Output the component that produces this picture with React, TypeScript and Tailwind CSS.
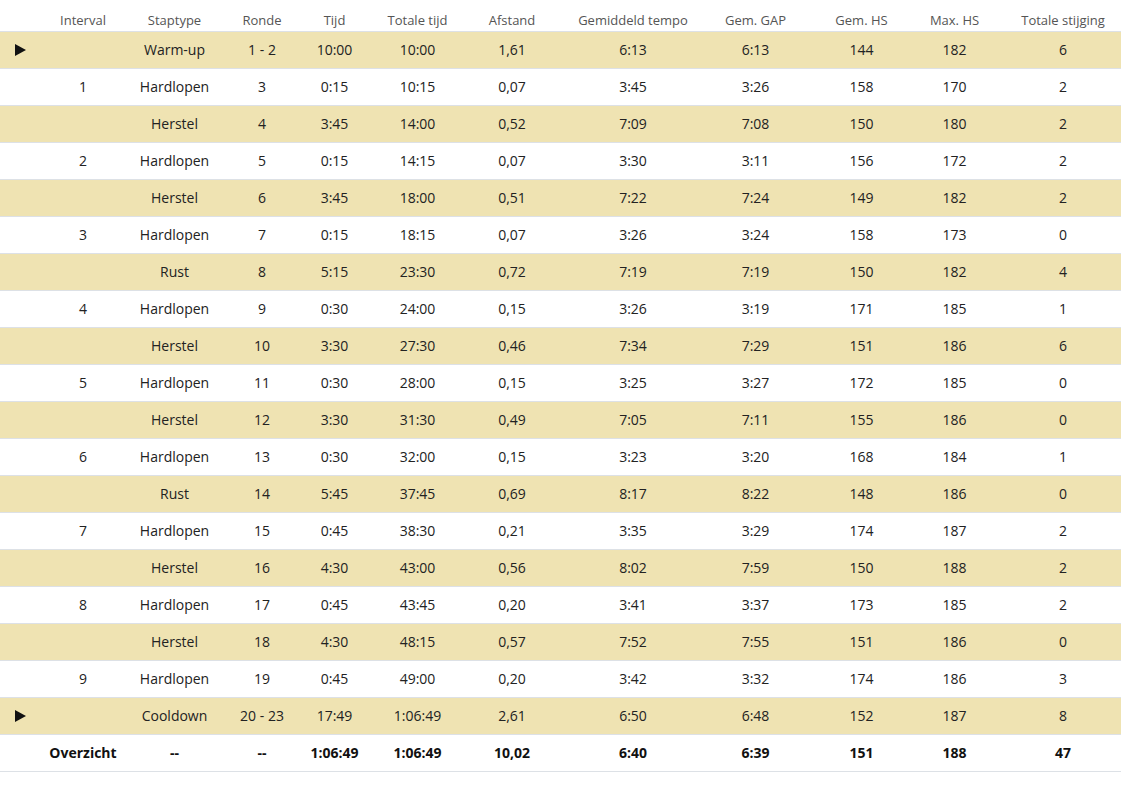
import React from "react";

type Row = { play?: boolean; iv: string; type: string; r: string; t: string; tt: string; d: string; p: string; g: string; hs: string; mx: string; s: string; hl: boolean };

const rows: Row[] = [
  { play: true, iv: "", type: "Warm-up", r: "1 - 2", t: "10:00", tt: "10:00", d: "1,61", p: "6:13", g: "6:13", hs: "144", mx: "182", s: "6", hl: true },
  { iv: "1", type: "Hardlopen", r: "3", t: "0:15", tt: "10:15", d: "0,07", p: "3:45", g: "3:26", hs: "158", mx: "170", s: "2", hl: false },
  { iv: "", type: "Herstel", r: "4", t: "3:45", tt: "14:00", d: "0,52", p: "7:09", g: "7:08", hs: "150", mx: "180", s: "2", hl: true },
  { iv: "2", type: "Hardlopen", r: "5", t: "0:15", tt: "14:15", d: "0,07", p: "3:30", g: "3:11", hs: "156", mx: "172", s: "2", hl: false },
  { iv: "", type: "Herstel", r: "6", t: "3:45", tt: "18:00", d: "0,51", p: "7:22", g: "7:24", hs: "149", mx: "182", s: "2", hl: true },
  { iv: "3", type: "Hardlopen", r: "7", t: "0:15", tt: "18:15", d: "0,07", p: "3:26", g: "3:24", hs: "158", mx: "173", s: "0", hl: false },
  { iv: "", type: "Rust", r: "8", t: "5:15", tt: "23:30", d: "0,72", p: "7:19", g: "7:19", hs: "150", mx: "182", s: "4", hl: true },
  { iv: "4", type: "Hardlopen", r: "9", t: "0:30", tt: "24:00", d: "0,15", p: "3:26", g: "3:19", hs: "171", mx: "185", s: "1", hl: false },
  { iv: "", type: "Herstel", r: "10", t: "3:30", tt: "27:30", d: "0,46", p: "7:34", g: "7:29", hs: "151", mx: "186", s: "6", hl: true },
  { iv: "5", type: "Hardlopen", r: "11", t: "0:30", tt: "28:00", d: "0,15", p: "3:25", g: "3:27", hs: "172", mx: "185", s: "0", hl: false },
  { iv: "", type: "Herstel", r: "12", t: "3:30", tt: "31:30", d: "0,49", p: "7:05", g: "7:11", hs: "155", mx: "186", s: "0", hl: true },
  { iv: "6", type: "Hardlopen", r: "13", t: "0:30", tt: "32:00", d: "0,15", p: "3:23", g: "3:20", hs: "168", mx: "184", s: "1", hl: false },
  { iv: "", type: "Rust", r: "14", t: "5:45", tt: "37:45", d: "0,69", p: "8:17", g: "8:22", hs: "148", mx: "186", s: "0", hl: true },
  { iv: "7", type: "Hardlopen", r: "15", t: "0:45", tt: "38:30", d: "0,21", p: "3:35", g: "3:29", hs: "174", mx: "187", s: "2", hl: false },
  { iv: "", type: "Herstel", r: "16", t: "4:30", tt: "43:00", d: "0,56", p: "8:02", g: "7:59", hs: "150", mx: "188", s: "2", hl: true },
  { iv: "8", type: "Hardlopen", r: "17", t: "0:45", tt: "43:45", d: "0,20", p: "3:41", g: "3:37", hs: "173", mx: "185", s: "2", hl: false },
  { iv: "", type: "Herstel", r: "18", t: "4:30", tt: "48:15", d: "0,57", p: "7:52", g: "7:55", hs: "151", mx: "186", s: "0", hl: true },
  { iv: "9", type: "Hardlopen", r: "19", t: "0:45", tt: "49:00", d: "0,20", p: "3:42", g: "3:32", hs: "174", mx: "186", s: "3", hl: false },
  { play: true, iv: "", type: "Cooldown", r: "20 - 23", t: "17:49", tt: "1:06:49", d: "2,61", p: "6:50", g: "6:48", hs: "152", mx: "187", s: "8", hl: true },
];

const widths = [38, 90, 93, 82, 63, 103, 86, 156, 89, 123, 63, 154];
const headers = ["", "Interval", "Staptype", "Ronde", "Tijd", "Totale tijd", "Afstand", "Gemiddeld tempo", "Gem. GAP", "Gem. HS", "Max. HS", "Totale stijging"];

function Play() {
  return (
    <svg width="11" height="12" viewBox="0 0 11 12" className="ml-[15px] block">
      <polygon points="0,0 11,6 0,12" fill="#111" />
    </svg>
  );
}

export default function App() {
  const cell = "h-[37px] p-0 text-center align-middle border-b border-[#dde1e6] whitespace-nowrap";
  return (
    <div className="w-[1121px] h-[787px] bg-white text-[14px] text-[#222] overflow-hidden" style={{ fontFamily: '"Open Sans", sans-serif' }}>
      <table className="table-fixed border-collapse w-[1140px]">
        <colgroup>
          {widths.map((w, i) => (
            <col key={i} style={{ width: w }} />
          ))}
        </colgroup>
        <thead>
          <tr>
            {headers.map((h, i) => (
              <th key={i} className="h-[31px] p-0 pb-[2px] text-center align-bottom text-[13px] leading-[18px] font-normal text-[#555] border-b border-[#dde1e6] whitespace-nowrap">
                {h}
              </th>
            ))}
          </tr>
        </thead>
        <tbody>
          {rows.map((r, i) => (
            <tr key={i} className={r.hl ? "bg-[#efe3b2]" : "bg-white"}>
              <td className={cell + " text-left"}>{r.play ? <Play /> : null}</td>
              <td className={cell}>{r.iv}</td>
              <td className={cell}>{r.type}</td>
              <td className={cell}>{r.r}</td>
              <td className={cell}>{r.t}</td>
              <td className={cell}>{r.tt}</td>
              <td className={cell}>{r.d}</td>
              <td className={cell}>{r.p}</td>
              <td className={cell}>{r.g}</td>
              <td className={cell}>{r.hs}</td>
              <td className={cell}>{r.mx}</td>
              <td className={cell}>{r.s}</td>
            </tr>
          ))}
          <tr className="bg-white font-bold text-[#111]">
            <td className={cell}></td>
            <td className={cell}>Overzicht</td>
            <td className={cell}>--</td>
            <td className={cell}>--</td>
            <td className={cell}>1:06:49</td>
            <td className={cell}>1:06:49</td>
            <td className={cell}>10,02</td>
            <td className={cell}>6:40</td>
            <td className={cell}>6:39</td>
            <td className={cell}>151</td>
            <td className={cell}>188</td>
            <td className={cell}>47</td>
          </tr>
        </tbody>
      </table>
    </div>
  );
}
